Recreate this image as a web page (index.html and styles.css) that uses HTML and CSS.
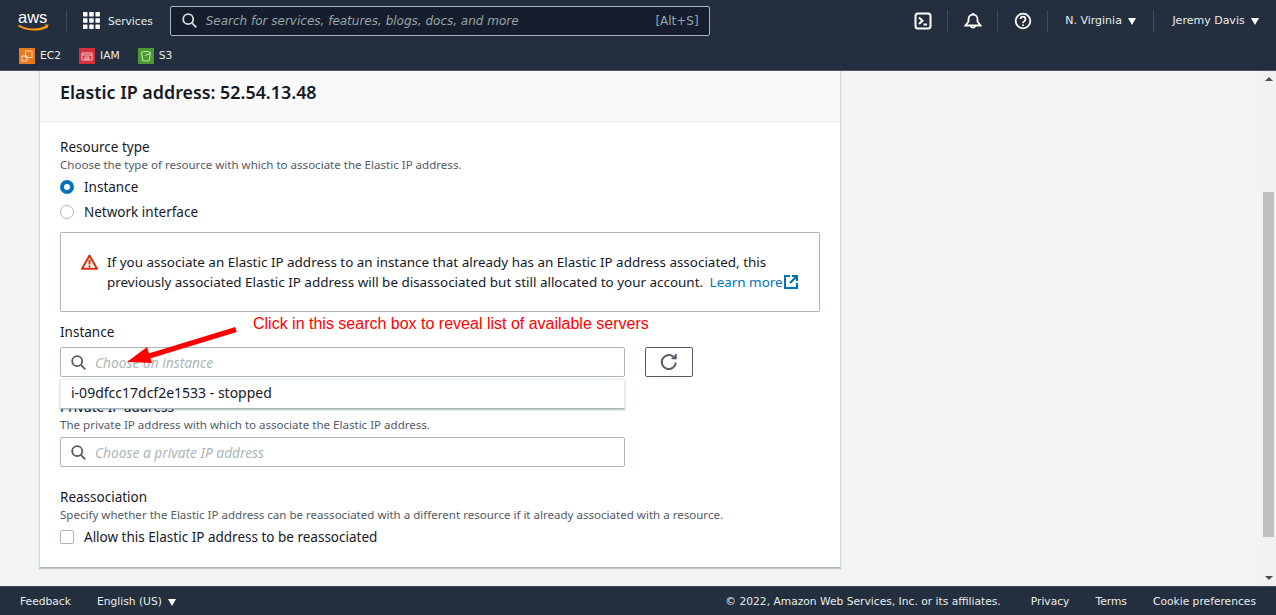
FILE: index.html
```html
<!DOCTYPE html>
<html lang="en">
<head>
<meta charset="utf-8">
<title>Associate Elastic IP address</title>
<link rel="stylesheet" href="styles.css">
</head>
<body>
<header class="topbar">
  <div class="nav-row">
    <svg class="aws-logo" width="36" height="22" viewBox="0 0 36 22"><text x="0" y="13" class="aws-text">aws</text><path d="M.5 15.500c8 5 20 5.500 28.500 1" fill="none" stroke="#f90" stroke-width="2"/><path d="M26.500 14.800l4-.6-.8 4z" fill="#f90"/></svg>
    <span class="nav-sep sep-logo"></span>
    <svg class="grid-icon" width="17" height="17" viewBox="0 0 17 17" fill="#fff"><rect width="4.500" height="4.500" rx=".6"/><rect x="6.200" width="4.500" height="4.500" rx=".6"/><rect x="12.400" width="4.500" height="4.500" rx=".6"/><rect y="6.200" width="4.500" height="4.500" rx=".6"/><rect x="6.200" y="6.200" width="4.500" height="4.500" rx=".6"/><rect x="12.400" y="6.200" width="4.500" height="4.500" rx=".6"/><rect y="12.400" width="4.500" height="4.500" rx=".6"/><rect x="6.200" y="12.400" width="4.500" height="4.500" rx=".6"/><rect x="12.400" y="12.400" width="4.500" height="4.500" rx=".6"/></svg>
    <span class="nav-text services">Services</span>
    <div class="global-search">
      <svg width="15" height="15" viewBox="0 0 15 15" fill="none" stroke="#d5dbdb" stroke-width="1.800"><circle cx="6.200" cy="6.200" r="5"/><path d="M9.800 9.800l4.500 4.500"/></svg>
      <span class="global-placeholder">Search for services, features, blogs, docs, and more</span>
      <span class="global-shortcut">[Alt+S]</span>
    </div>
    <div class="nav-right">
      <svg class="nav-icon" width="18" height="18" viewBox="0 0 18 18" fill="none" stroke="#fff" stroke-width="2"><rect x="1.500" y="1.500" width="15" height="15" rx="2.500"/><path d="M5 5.500l3.500 3.200L5 12M9.500 12.500h3.500"/></svg>
      <span class="nav-sep"></span>
      <svg class="nav-icon" width="18" height="18" viewBox="0 0 18 18" fill="none" stroke="#fff" stroke-width="1.800"><path d="M1.500 13.500l3-4V7a4.500 4.500 0 0 1 9 0v2.500l3 4z"/><path d="M6.800 14a2.300 2.300 0 0 0 4.400 0M9 1v1.500"/></svg>
      <span class="nav-sep"></span>
      <svg class="nav-icon" width="18" height="18" viewBox="0 0 18 18" fill="none" stroke="#fff" stroke-width="1.800"><circle cx="9" cy="9" r="7.300"/><path d="M6.500 7a2.500 2.500 0 1 1 3.800 2.200c-.9.500-1.300 1-1.300 2"/><path d="M9 12.500v1.500"/></svg>
      <span class="nav-sep"></span>
      <span class="nav-text region">N. Virginia <i class="caret"></i></span>
      <span class="nav-sep"></span>
      <span class="nav-text account">Jeremy Davis <i class="caret"></i></span>
    </div>
  </div>
  <div class="fav-row">
    <span class="fav"><svg width="16" height="16" viewBox="0 0 16 16"><rect width="16" height="16" fill="#e8791c"/><path d="M6.500 3h6.500v6.500H6.500zM3 8h5v5H3z" fill="none" stroke="#fff" stroke-width="1" opacity=".7"/></svg>EC2</span>
    <span class="fav"><svg width="16" height="16" viewBox="0 0 16 16"><rect width="16" height="16" fill="#d6303f"/><path d="M3 5h10v7H3zM3 7h10M6 9h4v2H6z" fill="none" stroke="#fff" stroke-width="1" opacity=".7"/></svg>IAM</span>
    <span class="fav"><svg width="16" height="16" viewBox="0 0 16 16"><rect width="16" height="16" fill="#4a9a30"/><path d="M3.500 4.500c2-1.500 7-1.500 9 0l-1.200 8c-1.500.8-5 .8-6.600 0zM7 7.500l5 -2" fill="none" stroke="#fff" stroke-width="1" opacity=".7"/></svg>S3</span>
  </div>
</header>

<main class="page">
  <div class="content">
    <section class="card">
      <div class="card-head"><h1>Elastic IP address: 52.54.13.48</h1></div>
      <div class="card-body">
        <div class="label">Resource type</div>
        <div class="desc">Choose the type of resource with which to associate the Elastic IP address.</div>
        <div class="radio-row first"><span class="radio on"></span>Instance</div>
        <div class="radio-row"><span class="radio"></span>Network interface</div>
        <div class="alert">
          <svg class="alert-icon" width="17" height="16" viewBox="0 0 17 16"><path d="M8.500 1.500L16 14.800H1z" fill="none" stroke="#d13212" stroke-width="2" stroke-linejoin="round"/><path d="M8.500 5.500v5M8.500 11.500v2" stroke="#d13212" stroke-width="2"/></svg>
          <p>If you associate an Elastic IP address to an instance that already has an Elastic IP address associated, this previously associated Elastic IP address will be disassociated but still allocated to your account. <a class="link">Learn more<svg class="ext" width="14" height="14" viewBox="0 0 14 14" fill="none" stroke="#0073bb" stroke-width="2"><path d="M6 1H1v12h12V8M8 1h5v5M13 1L6 8"/></svg></a></p>
        </div>
        <div class="label instance-label">Instance</div>
        <div class="input-row">
          <div class="input">
            <svg width="15" height="15" viewBox="0 0 15 15" fill="none" stroke="#545b64" stroke-width="1.800"><circle cx="6.200" cy="6.200" r="5"/><path d="M9.800 9.800l4.500 4.500"/></svg>
            <span class="placeholder">Choose an instance</span>
          </div>
          <button class="refresh" type="button"><svg width="18" height="18" viewBox="0 0 18 18" fill="none" stroke="#545b64" stroke-width="2"><path d="M15.800 9.500a7 7 0 1 1-2.500-5.800"/><path d="M16 1v4.500h-4.500" stroke-width="1.500" fill="#545b64"/></svg></button>
          <div class="dropdown">i-09dfcc17dcf2e1533 - stopped</div>
        </div>
        <div class="label private-label">Private IP address</div>
        <div class="desc">The private IP address with which to associate the Elastic IP address.</div>
        <div class="input private-input">
          <svg width="15" height="15" viewBox="0 0 15 15" fill="none" stroke="#545b64" stroke-width="1.800"><circle cx="6.200" cy="6.200" r="5"/><path d="M9.800 9.800l4.500 4.500"/></svg>
          <span class="placeholder">Choose a private IP address</span>
        </div>
        <div class="label reassoc-label">Reassociation</div>
        <div class="desc">Specify whether the Elastic IP address can be reassociated with a different resource if it already associated with a resource.</div>
        <div class="check-row"><span class="checkbox"></span>Allow this Elastic IP address to be reassociated</div>
      </div>
    </section>
    <div class="annotation">Click in this search box to reveal list of available servers</div>
    <svg class="arrow" width="112" height="42" viewBox="0 0 112 42"><path d="M110 4.500L20 32" stroke="#f00" stroke-width="5" fill="none"/><path d="M1 37L21 22L26 38z" fill="#f00"/></svg>
  </div>
  <div class="scrollbar">
    <i class="sb-up"></i>
    <div class="sb-track"><div class="sb-thumb"></div></div>
    <i class="sb-down"></i>
  </div>
</main>

<footer class="footer">
  <span class="foot-link feedback">Feedback</span>
  <span class="foot-link">English (US) <i class="caret"></i></span>
  <span class="copyright">© 2022, Amazon Web Services, Inc. or its affiliates.</span>
  <span class="foot-link">Privacy</span>
  <span class="foot-link">Terms</span>
  <span class="foot-link">Cookie preferences</span>
</footer>
</body>
</html>
```
FILE: styles.css
```css
* { box-sizing: border-box; }
html, body { margin: 0; height: 100%; overflow: hidden; }
body {
  display: flex;
  flex-direction: column;
  width: 1276px;
  height: 615px;
  font-family: "Noto Sans", sans-serif;
  color: #16191f;
  background: #f2f3f3;
}
.topbar {
  flex: 0 0 71px;
  background: #232f3e;
  border-bottom: 1px solid #4a5665;
  color: #fff;
}
.nav-row {
  display: flex;
  align-items: center;
  height: 41px;
  padding-left: 18px;
}
.aws-logo { flex: none; margin-top: 1px; }
.aws-text { font: 16.500px "Liberation Sans", sans-serif; fill: #fff; }
.nav-sep {
  flex: none;
  width: 1px;
  height: 22px;
  background: #414d5c;
}
.sep-logo { margin: 0 16px 0 12px; }
.nav-text {
  font-family: "DejaVu Sans", sans-serif;
  font-size: 11px;
  color: #eaeded;
  white-space: nowrap;
}
.services { margin-left: 8px; font-size: 10.600px; }
.global-search {
  display: flex;
  flex: none;
  align-items: center;
  width: 540px;
  height: 30px;
  margin-left: 17px;
  padding: 0 10px 0 11px;
  background: #161e2d;
  border: 1px solid #aab7b8;
  border-radius: 2px;
}
.global-placeholder {
  flex: 1;
  margin-left: 9px;
  font-family: "DejaVu Sans", sans-serif;
  font-style: oblique;
  font-size: 12px;
  color: #95a5a6;
  white-space: nowrap;
}
.global-shortcut {
  font-family: "DejaVu Sans", sans-serif;
  font-size: 12px;
  color: #95a5a6;
}
.nav-right {
  display: flex;
  align-items: center;
  margin-left: 188.500px;
}
.nav-icon { flex: none; margin: 0 15.500px; }
.region { margin: 0 17px 0 17px; }
.account { margin-left: 18px; }
.caret {
  display: inline-block;
  width: 0;
  height: 0;
  margin-left: 3px;
  border-left: 4.500px solid transparent;
  border-right: 4.500px solid transparent;
  border-top: 7px solid #fff;
  vertical-align: -1px;
}
.fav-row {
  display: flex;
  align-items: center;
  gap: 18px;
  height: 29px;
  padding-left: 19px;
}
.fav {
  display: flex;
  align-items: center;
  gap: 5px;
  font-family: "DejaVu Sans", sans-serif;
  font-size: 10.700px;
  color: #eaeded;
}

.page {
  position: relative;
  display: flex;
  flex: 1;
  min-height: 0;
  background: #f2f3f3;
}
.content {
  position: relative;
  flex: 1;
  padding-left: 39px;
}
.card {
  width: 802px;
  height: 497px;
  background: #fff;
  border: 1px solid #d5dbdb;
  border-top: 0;
  border-bottom: 1px solid #aab7b8;
  box-shadow: 0 1px 1px rgba(0, 28, 36, .2);
}
.card-head {
  display: flex;
  align-items: center;
  height: 51px;
  padding-left: 20px;
  background: #fafafa;
  border-bottom: 1px solid #eaeded;
}
.card-head h1 {
  margin: 0 0 8px;
  font-size: 17.850px;
  font-weight: 600;
  color: #16191f;
}
.card-body { padding: 16px 20px 0; }
.label { margin-bottom: 1px; font-size: 13.500px; line-height: 18px; color: #16191f; }
.desc { font-size: 11.550px; line-height: 16px; color: #545b64; }
.radio-row, .check-row {
  display: flex;
  align-items: center;
  gap: 10px;
  height: 25px;
  font-size: 13.500px;
  color: #16191f;
}
.radio-row.first { margin-top: 1px; }
.radio {
  flex: none;
  width: 14px;
  height: 14px;
  border: 1px solid #aab7b8;
  border-radius: 50%;
  background: #fff;
}
.radio.on { border: 4px solid #0073bb; }
.alert {
  display: flex;
  align-items: flex-start;
  width: 760px;
  height: 80px;
  margin-top: 8px;
  padding: 19px 20px 0 20px;
  border: 1px solid #aab7b8;
  border-radius: 2px;
}
.alert-icon { flex: none; margin: 2px 9px 0 0; }
.alert p {
  margin: 0;
  font-size: 13.450px;
  line-height: 20px;
  color: #16191f;
}
.link { margin-left: 3px; color: #0073bb; }
.ext { margin-left: 1px; vertical-align: -2px; }
.instance-label { margin-top: 11px; }
.input-row {
  position: relative;
  display: flex;
  gap: 20px;
  margin-top: 6px;
}
.input {
  display: flex;
  align-items: center;
  width: 565px;
  height: 30px;
  padding-left: 10px;
  border: 1px solid #aab7b8;
  border-radius: 2px;
  background: #fff;
}
.placeholder {
  margin: 1px 0 0 9px;
  font-size: 13.750px;
  font-style: italic;
  color: #aab7b8;
}
.refresh {
  display: flex;
  align-items: center;
  justify-content: center;
  width: 48px;
  height: 30px;
  padding: 0;
  background: #fff;
  border: 1px solid #545b64;
  border-radius: 2px;
}
.dropdown {
  position: absolute;
  top: 32px;
  left: 0;
  width: 565px;
  height: 30px;
  padding: 4px 10px 0;
  font-size: 14px;
  line-height: 18px;
  background: #fff;
  border: 1px solid #eaeded;
  border-bottom: 1px solid #aab7b8;
  box-shadow: 0 1px 2px rgba(0, 28, 36, .3);
  z-index: 2;
}
.private-label { margin-top: 21px; }
.private-input { margin-top: 4px; }
.reassoc-label { margin-top: 21px; }
.check-row { margin-top: 2px; height: 24px; }
.checkbox {
  flex: none;
  width: 14px;
  height: 14px;
  border: 1px solid #aab7b8;
  border-radius: 2px;
  background: #fff;
}
.annotation {
  position: absolute;
  left: 253px;
  top: 244px;
  font-family: "Liberation Sans", sans-serif;
  font-size: 16px;
  line-height: 18px;
  color: #f00;
  white-space: nowrap;
}
.arrow {
  position: absolute;
  left: 126px;
  top: 254px;
  z-index: 3;
}
.scrollbar {
  display: flex;
  flex: 0 0 15px;
  flex-direction: column;
  align-items: center;
  background: #f1f1f1;
}
.sb-up, .sb-down {
  flex: none;
  width: 0;
  height: 0;
  margin: 6px 0;
  border-left: 4px solid transparent;
  border-right: 4px solid transparent;
}
.sb-up { border-bottom: 4px solid #505050; }
.sb-down { border-top: 4px solid #505050; }
.sb-track { flex: 1; width: 100%; display: flex; justify-content: center; }
.sb-thumb {
  width: 11px;
  height: 345px;
  margin-top: 105px;
  background: #c1c1c1;
}
.footer {
  flex: 0 0 29px;
  display: flex;
  align-items: center;
  padding: 0 20px;
  background: #232f3e;
  border-top: 1px solid #414d5c;
  font-family: "DejaVu Sans", sans-serif;
  font-size: 10.700px;
  color: #eaeded;
  white-space: nowrap;
}
.foot-link { margin-right: 26px; }
.foot-link:last-child { margin-right: 0; }
.copyright { margin-left: auto; margin-right: 30px; }
```
